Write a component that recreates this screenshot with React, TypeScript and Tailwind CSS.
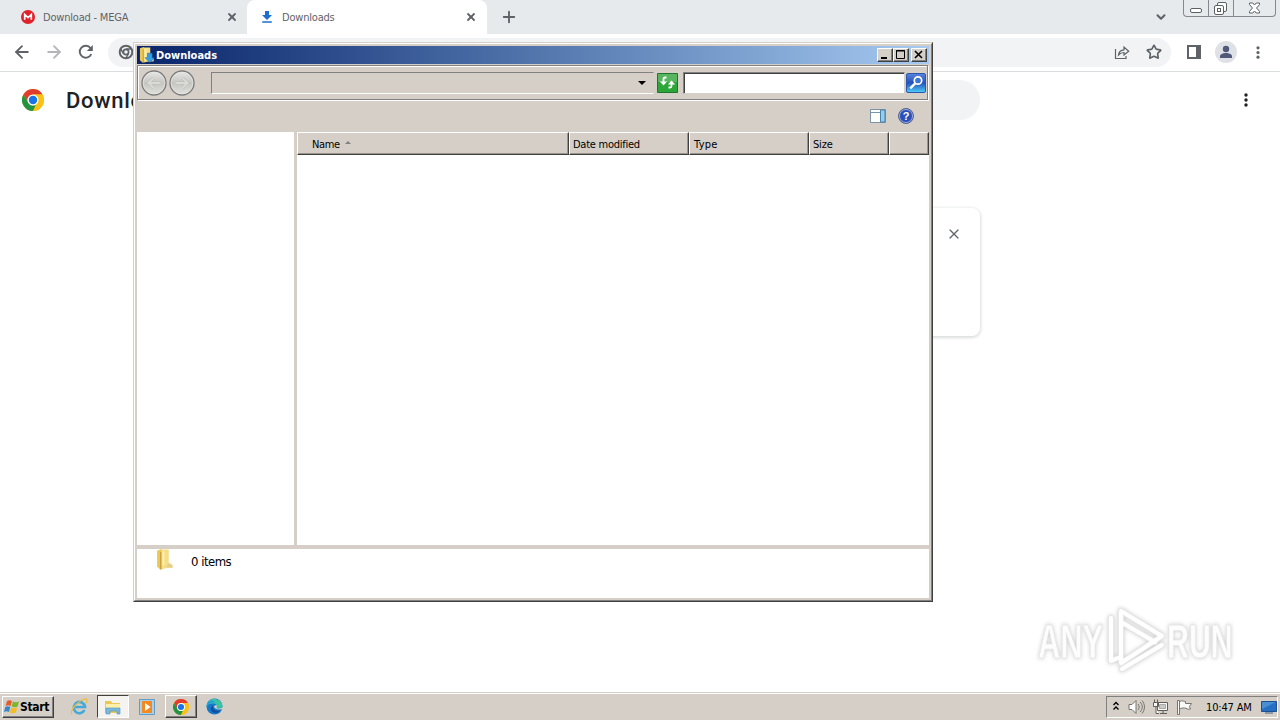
import type { ReactNode } from "react";
import { ArrowLeft, ArrowRight, ChevronDown, Plus, Star, X } from "lucide-react";

const columns = [
  { label: "Name", className: "w-[272px] pl-[14px] tracking-[-0.35px]", sorted: true },
  { label: "Date modified", className: "w-[120px] pl-[3px] tracking-[-0.25px]" },
  { label: "Type", className: "w-[120px] pl-1 tracking-[0.3px]" },
  { label: "Size", className: "w-[80px] pl-[3px] tracking-[-0.2px]" },
  { label: "", className: "w-[40px]" },
];

function ChromeLogo({ className = "" }: { className?: string }) {
  return (
    <svg viewBox="0 0 24 24" className={className}>
      <circle cx="12" cy="12" r="12" fill="#fbc116" />
      <path d="M1.6 6A12 12 0 0 1 22.4 6H12a6 6 0 0 0-5.2 9z" fill="#e33b2e" />
      <path d="M1.6 6 6.8 15A6 6 0 0 0 12 18c1.2 0 2.2-.3 3.1-.9L12 24A12 12 0 0 1 1.6 6z" fill="#229342" />
      <path d="M22.4 6H12a6 6 0 0 1 5.2 9L12 24A12 12 0 0 0 22.4 6z" fill="#fbc116" />
      <circle cx="12" cy="12" r="6" fill="#fff" />
      <circle cx="12" cy="12" r="4.6" fill="#1a73e8" />
    </svg>
  );
}

function Dots({ className = "" }: { className?: string }) {
  return (
    <svg viewBox="0 0 4 14" className={className} fill="currentColor">
      <circle cx="2" cy="2" r="1.7" />
      <circle cx="2" cy="7" r="1.7" />
      <circle cx="2" cy="12" r="1.7" />
    </svg>
  );
}

function TabStrip() {
  return (
    <div className="flex h-[34px] shrink-0 bg-[#e7eaed] text-[11px] tracking-[-0.2px] text-[#5f6368]">
      <div className="flex w-[247px] items-center pl-[21px] pr-[9px]">
        <svg viewBox="0 0 14 14" className="mr-2 h-[14px] w-[14px]">
          <circle cx="7" cy="7" r="7" fill="#e0202a" />
          <path d="M3.7 9.8V4.4L7 7.6l3.3-3.2v5.4" fill="none" stroke="#fff" strokeWidth="1.7" />
        </svg>
        <span className="grow pt-[2px]">Download - MEGA</span>
        <X className="h-[12px] w-[12px]" strokeWidth={3.6} />
      </div>
      <div className="flex w-[240px] items-center rounded-t-lg bg-white pl-[14px] pr-[10px]">
        <svg viewBox="0 0 12 12" className="mr-[9px] h-[12px] w-[12px]" fill="#1a6fd0">
          <path d="M4 0h4v4h3L6 9 1 4h3zM1.2 10.3h9.6v1.5H1.2z" />
        </svg>
        <span className="grow pt-[2px]">Downloads</span>
        <X className="h-[12px] w-[12px]" strokeWidth={3.6} />
      </div>
      <div className="flex grow items-center pl-[13px]">
        <Plus className="h-[18px] w-[18px]" strokeWidth={2.5} />
      </div>
      <div className="flex items-center pr-[15px]">
        <ChevronDown className="h-[14px] w-[14px]" strokeWidth={3.5} />
      </div>
      <div className="mr-1 flex h-[17px] w-[93px] rounded-b-[4px] border border-t-0 border-[#85898e]">
        <svg viewBox="0 0 91 16" className="h-4 w-[91px]" fill="none" stroke="#5b6066">
          <path d="M24.5 0v16M49.5 0v16" stroke="#85898e" />
          <rect x="6.500" y="8.500" width="11" height="4" rx="1.500" fill="#fff" />
          <rect x="33.500" y="2.500" width="9" height="9" rx="1.500" fill="#fff" />
          <rect x="30.500" y="5.500" width="9" height="9" rx="1.500" fill="#fff" />
          <rect x="33.500" y="8.500" width="3" height="3" />
          <path d="M65.500 3h3.300l1.700 2 1.700-2h3.300v1.600l-3 3.400 3 3.400v1.600h-3.300l-1.700-2-1.700 2h-3.300v-1.600l3-3.400-3-3.400z" fill="#fff" />
        </svg>
      </div>
    </div>
  );
}

function AddressBar() {
  return (
    <div className="flex h-[38px] shrink-0 items-center border-b border-[#dadce0] bg-white pb-px pl-[12px] text-[#5f6368]">
      <ArrowLeft className="mr-3 h-5 w-5" strokeWidth={2.2} />
      <ArrowRight className="mr-[14px] h-5 w-5 text-[#b4b6b9]" strokeWidth={2.2} />
      <svg viewBox="0 0 16 16" className="mr-[14px] h-4 w-4">
        <path d="M13.300 10A6 6 0 1 1 12.600 4.200" fill="none" stroke="currentColor" strokeWidth="1.900" />
        <path d="M14.800 1v6H8.800z" fill="currentColor" />
      </svg>
      <div className="flex h-[29px] w-[1063px] items-center justify-between rounded-full bg-[#f1f3f4] pl-[10px] pr-[9px]">
        <svg viewBox="0 0 16 16" className="h-4 w-4" fill="none" stroke="#5f6368">
          <circle cx="8" cy="8" r="6.300" strokeWidth="2" />
          <circle cx="8" cy="8" r="2.600" strokeWidth="1.700" />
          <path d="M8 5h6M5.300 9.300 2.500 4.700M10.600 9.400 8 14" strokeWidth="1.500" />
        </svg>
        <div className="flex items-center gap-4">
          <svg viewBox="0 0 16 15" className="h-[15px] w-4" fill="none" stroke="#5f6368" strokeWidth="1.200">
            <path d="M1.500 4v9.500H12V11M4.500 10c.4-3.400 2.500-5 5.500-5.200V2l4.700 4.200L10 10V7.500C7.500 7.500 6 8.300 4.500 10z" />
          </svg>
          <Star className="h-4 w-4" strokeWidth={2.5} strokeLinejoin="miter" />
        </div>
      </div>
      <svg viewBox="0 0 14 14" className="ml-4 h-[14px] w-[14px]">
        <path d="M1 1h12v12H1z" fill="#fff" stroke="#5f6368" strokeWidth="2" />
        <path d="M9 0h5v14H9z" fill="#5f6368" />
      </svg>
      <svg viewBox="0 0 22 22" className="ml-[14px] h-[22px] w-[22px]">
        <circle cx="11" cy="11" r="11" fill="#dee1e6" />
        <circle cx="11" cy="8" r="3.200" fill="#50597a" />
        <path d="M5 17v-1.700c0-2 3-3.300 6-3.300s6 1.300 6 3.300V17z" fill="#50597a" />
      </svg>
      <Dots className="ml-[19px] h-[13px] w-[4px]" />
    </div>
  );
}

function DownloadsPage() {
  return (
    <div className="flex grow flex-col bg-white">
      <div className="flex h-14 items-center pl-[22px] pr-[32px]">
        <ChromeLogo className="h-[22px] w-[22px]" />
        <h1 className="ml-[22px] w-[200px] font-[Roboto] text-[22px] font-medium tracking-[0.7px] text-[#202124]">Downloads</h1>
        <div className="ml-[34px] h-10 w-[680px] rounded-full bg-[#f1f3f4]" />
        <Dots className="ml-auto h-[14px] w-[4px] text-[#202124]" />
      </div>
      <div className="ml-[300px] mt-20 flex h-32 w-[680px] justify-end rounded-lg bg-white pr-[18px] pt-[18px] shadow-[0_1px_3px_1px_rgba(60,64,67,0.18)]">
        <X className="h-4 w-4 text-[#5f6368]" strokeWidth={1.9} />
      </div>
      <svg viewBox="0 0 230 70" className="ml-[1030px] mt-[269px] h-[70px] w-[230px] drop-shadow-[0_0_2px_#c8c8c8]">
        <g fill="#fdfdfd" stroke="#e9e9e9" strokeWidth=".8" fontFamily="'Liberation Sans', sans-serif" fontSize="49" fontWeight="bold">
          <text transform="translate(8 53) scale(.63 1)">ANY</text>
          <text transform="translate(137 53) scale(.62 1)">RUN</text>
        </g>
        <g transform="translate(1 1)" fill="none" strokeLinejoin="round" strokeLinecap="round">
          <path d="M80 12v43l7-3M90 5v50M90 5l41 25-41 27M90 16l34 20M91 63l40-24" stroke="#e7e7e7" strokeWidth="6" />
          <path d="M80 12v43l7-3M90 5v50M90 5l41 25-41 27M90 16l34 20M91 63l40-24" stroke="#fff" strokeWidth="4" />
        </g>
      </svg>
    </div>
  );
}

function CaptionButton({ children, className = "" }: { children: ReactNode; className?: string }) {
  return (
    <div className={`h-[14px] w-4 border border-b-[#404040] border-l-white border-r-[#404040] border-t-white bg-[#d4d0c8] shadow-[inset_-1px_-1px_0_#808080] ${className}`}>
      <svg viewBox="0 0 14 12" className="h-3 w-[14px]" fill="none" stroke="#000">{children}</svg>
    </div>
  );
}

function NavButton({ flip = false }: { flip?: boolean }) {
  return (
    <svg viewBox="0 0 26 26" className={`h-[26px] w-[26px] ${flip ? "-scale-x-100" : ""}`}>
      <defs>
        <linearGradient id={flip ? "navForward" : "navBack"} x2="0" y2="1">
          <stop stopColor="#e8e8e6" />
          <stop offset=".5" stopColor="#c5c5c2" />
          <stop offset="1" stopColor="#e2e2df" />
        </linearGradient>
      </defs>
      <circle cx="13" cy="13" r="12" fill={flip ? "url(#navForward)" : "url(#navBack)"} stroke="#7c7c7c" strokeWidth="1.300" />
      <circle cx="13" cy="13" r="10.800" fill="none" stroke="#e6e6e4" strokeWidth=".7" />
      <path d="M19.500 13H7.500M12.500 8 7.500 13l5 5" fill="none" stroke="#bdbdba" strokeWidth="3.200" />
      <path d="M19.500 13H7.500M12.500 8 7.500 13l5 5" fill="none" stroke="#dadad7" strokeWidth="2" />
    </svg>
  );
}

function FolderIcon({ className = "", arrow = false }: { className?: string; arrow?: boolean }) {
  return (
    <svg viewBox="0 0 16 18" preserveAspectRatio="none" className={className}>
      <path d="M1 1.500 5 0l1 2v15l-2 .7L1 15z" fill="#ecc957" />
      <path d="M5 .500h7v11l3.500 2v2.500l-7 .5-3 1z" fill="#f5de86" />
      <path d="M4.500 2.500v15" stroke="#b98a3c" strokeWidth=".8" />
      <path d="M7 2v12" stroke="#fff1b4" strokeWidth="1.800" />
      <path d="M12 12.500 9 15.500l6.500.5v-2z" fill="#e3cf91" />
      {arrow && <path d="M9 7h5v5h2.500l-5 5.500-5-5.500H9z" fill="#36a0e4" stroke="#176da9" strokeWidth=".6" />}
    </svg>
  );
}

function ExplorerWindow() {
  return (
    <div className="absolute left-[133px] top-[42px] h-[560px] w-[800px] border border-b-[#404040] border-l-[#d4d0c8] border-r-[#404040] border-t-[#d4d0c8] bg-[#d5cfc8]">
      <div className="flex h-full flex-col border border-b-[#808080] border-l-white border-r-[#808080] border-t-white p-[2px]">
        <div className="flex h-[18px] shrink-0 items-center bg-gradient-to-r from-[#0a246a] to-[#a6caf0] pr-[2px] text-white">
          <FolderIcon arrow className="ml-[2px] h-4 w-[15px]" />
          <span className="ml-[2px] grow pt-[2px] text-[11px] font-bold tracking-[0px]">Downloads</span>
          <CaptionButton><path d="M3 9h6" strokeWidth="2" /></CaptionButton>
          <CaptionButton><path d="M2.500 1.500h8v8h-8zM2 2h9" /></CaptionButton>
          <CaptionButton className="ml-[2px]"><path d="m3 2 7 7M10 2 3 9" strokeWidth="1.600" /></CaptionButton>
        </div>
        <div className="mr-[1px] mt-px flex h-[35px] shrink-0 items-center border border-[#808080] pl-[3px] shadow-[inset_1px_1px_0_#fff,1px_1px_0_#fff]">
          <NavButton />
          <div className="ml-[2px] flex"><NavButton flip /></div>
          <div className="ml-4 flex h-[22px] w-[443px] items-center justify-end border border-b-white border-l-[#808080] border-r-transparent border-t-[#808080] pr-[7px]">
            <div className="h-0 w-0 border-x-4 border-t-4 border-x-transparent border-t-black" />
          </div>
          <svg viewBox="0 0 21 20" className="ml-[3px] h-5 w-[21px]">
            <path d="M.5.500h20v19H.5z" fill="#2ca638" stroke="#20762a" />
            <path d="M1 1h19v8H1z" fill="#58b55f" />
            <path d="M9.500 4.500H8Q6.500 4.500 6.500 6v5M11.500 14.500H13q1.500 0 1.500-1.500V9" fill="none" stroke="#fff" strokeWidth="1.800" />
            <path d="M2.800 8.500h7.400l-3.700 4zM10.800 11.500h7.400l-3.700-4z" fill="#fff" />
          </svg>
          <div className="ml-[5px] h-[22px] w-[222px] border border-b-[#d4d0c8] border-l-[#808080] border-r-[#d4d0c8] border-t-[#808080] bg-white shadow-[inset_1px_1px_0_#404040]" />
          <svg viewBox="0 0 20 20" className="ml-[1px] h-5 w-5 shrink-0">
            <defs>
              <linearGradient id="searchFill" x2="0" y2="1">
                <stop stopColor="#5b84dc" />
                <stop offset=".5" stopColor="#2552b8" />
                <stop offset="1" stopColor="#4fd0fa" />
              </linearGradient>
            </defs>
            <rect x=".5" y=".5" width="19" height="19" rx="1.500" fill="url(#searchFill)" stroke="#2b58ae" />
            <circle cx="12" cy="7.500" r="3.700" fill="#3d75d5" stroke="#fff" strokeWidth="1.700" />
            <path d="m9.200 10.300-5 5" stroke="#fff" strokeWidth="2.400" />
          </svg>
        </div>
        <div className="flex h-8 shrink-0 items-center justify-end gap-3 pr-[15px]">
          <svg viewBox="0 0 16 14" className="h-[14px] w-4">
            <path d="M.5.500h15v13H.5z" fill="#fff" stroke="#7c93a8" />
            <path d="M1 3.500h9" stroke="#7996b1" />
            <path d="M10.500 1h4.500v12h-4.500z" fill="#8fd0ea" stroke="#4a80aa" />
          </svg>
          <svg viewBox="0 0 16 16" className="h-4 w-4">
            <circle cx="8" cy="8" r="7.500" fill="#2b4fb8" stroke="#5d6784" />
            <circle cx="8" cy="8" r="6.500" fill="none" stroke="#b4c2e8" strokeWidth=".8" />
            <text x="8" y="12" textAnchor="middle" fill="#fff" fontFamily="'Liberation Sans', sans-serif" fontSize="11" fontWeight="bold">?</text>
          </svg>
        </div>
        <div className="flex h-[413px] shrink-0 gap-[3px]">
          <div className="w-[157px] bg-white" />
          <div className="w-[632px] bg-white">
            <div className="flex h-[23px] text-[11px] text-black">
              {columns.map((column) => (
                <div
                  key={column.label}
                  className={`flex items-center border border-b-[#404040] border-l-white border-r-[#404040] border-t-white bg-[#d5cfc8] pt-[3px] shadow-[inset_-1px_-1px_0_#98948e] ${column.className}`}
                >
                  {column.label}
                  {column.sorted && <div className="mb-[5px] ml-[5px] h-0 w-0 border-x-[3px] border-b-[3px] border-x-transparent border-b-[#808080]" />}
                </div>
              ))}
            </div>
          </div>
        </div>
        <div className="mt-1 flex grow items-start bg-white pl-[19px]">
          <FolderIcon className="h-[21px] w-[17px]" />
          <span className="ml-[18px] mt-1 text-[13px] leading-[18px] tracking-[-0.5px] text-black">0 items</span>
        </div>
      </div>
    </div>
  );
}

function Taskbar() {
  return (
    <div className="flex h-[28px] shrink-0 items-center border-t border-[#d4d0c8] bg-[#d5cfc8] pl-[2px] pr-[2px] shadow-[inset_0_1px_0_#fff]">
      <div className="flex h-[22px] w-[52px] items-center border border-b-[#404040] border-l-white border-r-[#404040] border-t-white pl-[1px] shadow-[inset_-1px_-1px_0_#808080]">
        <svg viewBox="0 0 16 15" className="h-[15px] w-4 shrink-0">
          <path d="M3 2c2-1 3-1 5 0L6.600 7c-2-1-3-1-5 0z" fill="#e65b2c" />
          <path d="M9 2.500c2 1 4 1 6 0l-1.400 5c-2 1-4 1-6 0z" fill="#7eb52b" />
          <path d="M1.300 8c2-1 3-1 5 0L5 13c-2-1-3-1-5 0z" fill="#3587c9" />
          <path d="M7.300 8.500c2 1 4 1 6 0l-1.400 5c-2 1-4 1-6 0z" fill="#f3bc24" />
        </svg>
        <span className="text-[12px] font-bold tracking-[-0.3px] text-black">Start</span>
      </div>
      <svg viewBox="0 0 18 18" className="ml-[16px] h-[18px] w-[18px]" fill="none">
        <path d="M14.500 12A5.600 5.600 0 1 1 15 9H4" stroke="#45a9dc" strokeWidth="2.700" />
        <path d="M2 16C-1 14 7 3 15 1c3-.6 2 3 .8 4.500" stroke="#edbd35" strokeWidth="1.200" />
      </svg>
      <div className="ml-[9px] flex h-[23px] w-8 items-center justify-center border border-b-white border-l-[#404040] border-r-white border-t-[#404040] bg-[#f5f3ef]">
        <svg viewBox="0 0 18 16" className="h-4 w-[18px]">
          <path d="M1 2h6l1 2h8v10H1z" fill="#ecc758" />
          <path d="M2 5h14v7H2z" fill="#fff0a9" />
          <path d="M2 15V9h14v6h-3v-3H6v3z" fill="#79b9df" stroke="#4a91be" strokeWidth=".6" />
        </svg>
      </div>
      <svg viewBox="0 0 16 16" className="ml-[10px] h-4 w-4">
        <path d="M.5.500h15v15H.5z" fill="#a8d0ee" stroke="#639cc5" />
        <path d="M3 2h10v12H3z" fill="#f28a21" />
        <circle cx="8" cy="8" r="5" fill="#f28a21" />
        <path d="m6 4 5.500 4L6 12z" fill="#fff" />
      </svg>
      <div className="ml-[10px] flex h-[23px] w-8 items-center justify-center border border-b-[#404040] border-l-white border-r-[#404040] border-t-white shadow-[inset_-1px_-1px_0_#808080]">
        <ChromeLogo className="h-4 w-4" />
      </div>
      <svg viewBox="0 0 17 17" className="ml-[9px] h-[17px] w-[17px]">
        <circle cx="8.500" cy="8.500" r="8" fill="#1479c9" />
        <path d="M.7 7C2-1 15-1 16.500 7.500c.3 3-4 4-6 2.500 1-2 0-4.500-3-4.500C4 5.500 1.500 6 .7 9z" fill="#39c3a5" />
        <path d="M.7 7C2 2 7 2 9.500 4.500 6 4 2.500 5 .7 9z" fill="#249ee0" />
        <path d="M7 7.500c-1 4 3 6.500 7.500 4.500-2 4-8 4-9.500 0-.6-2 .5-4 2-4.500z" fill="#104f9f" />
        <path d="M8 8c0 3 4 4.500 9 3l-.5-2c-1 1.500-4 2.500-6 1 .5-.7.600-2 0-3z" fill="#d5cfc8" />
      </svg>
      <div className="ml-auto flex h-[22px] w-[172px] items-center border border-b-white border-l-[#808080] border-r-white border-t-[#808080] pl-[5px]">
        <svg viewBox="0 0 8 10" className="mb-[2px] h-[10px] w-[8px]" fill="none" stroke="#000" strokeWidth="1.400">
          <path d="m1.500 4 2.500-2.500L6.500 4M1.500 8.500 4 6l2.500 2.500" />
        </svg>
        <svg viewBox="0 0 17 16" className="ml-[8px] h-4 w-[17px]" stroke="#77736d" fill="none">
          <path d="M1 5.500h3l4-4v13l-4-4H1z" fill="#fff" />
          <path d="M10 5c1.500 2 1.500 4 0 6M12 3c3 3 3 7 0 10M14 1.500c3.300 4 3.300 9 0 13" />
        </svg>
        <svg viewBox="0 0 16 16" className="ml-[7px] h-4 w-4" fill="#f8f8f7" stroke="#625f5b">
          <path d="M5.500 3.500h10v8h-10zM8 14.500h7M11 12v2M1.500 3.500h5v4h-5zM2.500 3V.5M5.500 3V.5M4 8v6.500h3" />
          <path d="M7.500 5.500h6v4h-6z" fill="#cbc9c5" stroke="#aaa" />
        </svg>
        <svg viewBox="0 0 16 16" className="ml-[8px] h-4 w-4" fill="#f9f9f8" stroke="#77736d">
          <path d="M1.500 1.500h2v14h-2zM3.500 2.500c3-1.500 4 0 6 0v2h6l-2 3 1 2.500c-3 1-4-1-6-1s-3 0-5 1z" />
        </svg>
        <span className="ml-[14px] whitespace-nowrap pt-[3px] text-[11px] tracking-[-0.15px] text-black">10:47 AM</span>
        <svg viewBox="0 0 16 14" className="ml-auto h-[14px] w-4">
          <path d="M.5 1.500h15v10H.5z" fill="#2670c4" stroke="#1c4f91" />
          <path d="M1 2h14L1 9z" fill="#4b8fd3" />
          <path d="M4 13h8" stroke="#3f6285" />
        </svg>
      </div>
    </div>
  );
}

export default function App() {
  return (
    <div className="relative flex h-[720px] w-[1280px] flex-col overflow-hidden bg-white font-['DejaVu_Sans_Condensed','Noto_Sans',sans-serif]">
      <TabStrip />
      <AddressBar />
      <DownloadsPage />
      <Taskbar />
      <ExplorerWindow />
    </div>
  );
}
